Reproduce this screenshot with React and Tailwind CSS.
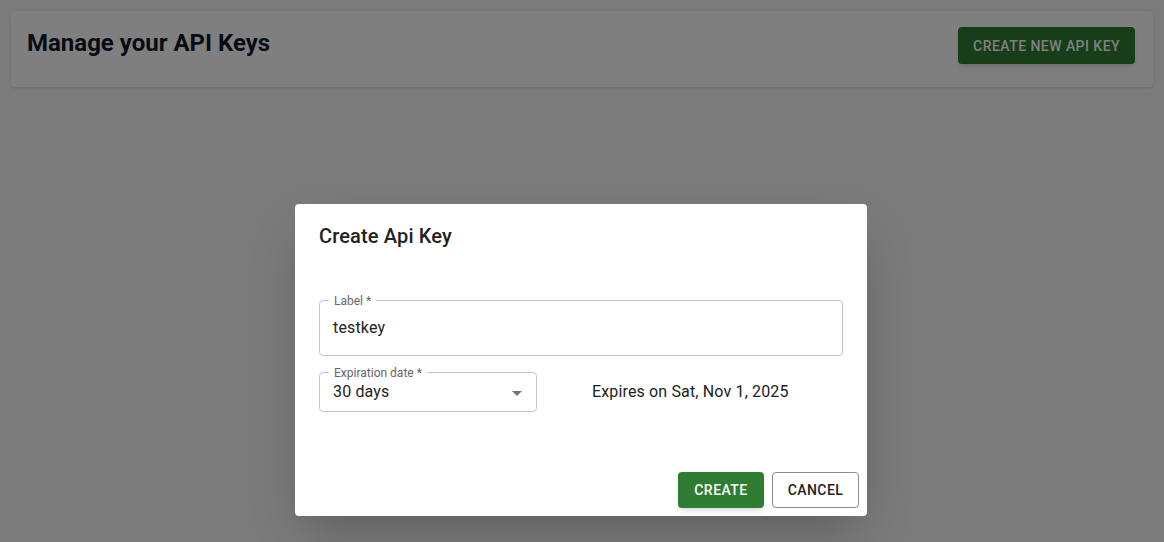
export default function App() {
  return (
    <div className="relative min-h-[542px] bg-[#f6f6f6] font-['Roboto',sans-serif] p-[11px]">
      <div className="flex items-start justify-between bg-white rounded h-[76px] pl-4 pr-[18px] pt-4 shadow-sm">
        <h1 className="text-2xl font-bold text-[#0f172a] leading-[30px] mt-[1px]">Manage your API Keys</h1>
        <button className="h-[37px] px-[15px] rounded bg-[#2e7d32] text-white text-sm font-medium tracking-[0.45px] uppercase shadow-md">
          Create new API key
        </button>
      </div>

      {/* overlay */}
      <div className="absolute inset-0 bg-black/50 flex items-start justify-center pt-[204px] pr-[2px]">
        <div className="w-[572px] h-[312px] bg-white rounded shadow-2xl flex flex-col">
          <h2 className="px-6 pt-4 pb-4 text-xl font-medium text-[#222] leading-8 tracking-[0.15px]">Create Api Key</h2>
          <div className="px-6 pt-[32px] flex flex-col flex-1">
            <div className="relative h-14 border border-[#c4c4c4] rounded px-[13px] flex items-center">
              <span className="absolute top-[-8px] left-[9px] bg-white px-[5px] text-xs text-[#666] leading-4">Label *</span>
              <span className="text-base text-[#222] tracking-[0.15px]">testkey</span>
            </div>
            <div className="flex items-center mt-[16px]">
              <div className="relative w-[218px] h-[40px] border border-[#c4c4c4] rounded pl-[13px] pr-[7px] flex items-center justify-between">
                <span className="absolute top-[-8px] left-[9px] bg-white px-[5px] text-xs text-[#666] leading-4">Expiration date *</span>
                <span className="text-base text-[#222] mt-[-1px] tracking-[0.15px]">30 days</span>
                <svg width="24" height="24" viewBox="0 0 24 24" className="mt-[2px]">
                  <path d="M7 10l5 5 5-5z" fill="#757575" />
                </svg>
              </div>
              <span className="ml-[55px] text-base text-[#222] tracking-[0.15px]">Expires on Sat, Nov 1, 2025</span>
            </div>
          </div>
          <div className="flex justify-end gap-2 p-2">
            <button className="h-9 w-[86px] rounded bg-[#2e7d32] text-white text-sm font-medium tracking-[0.45px] shadow-md">CREATE</button>
            <button className="h-9 w-[87px] rounded bg-white border border-[#8a8a8a] text-[#222] text-sm font-medium tracking-[0.45px]">CANCEL</button>
          </div>
        </div>
      </div>
    </div>
  );
}
